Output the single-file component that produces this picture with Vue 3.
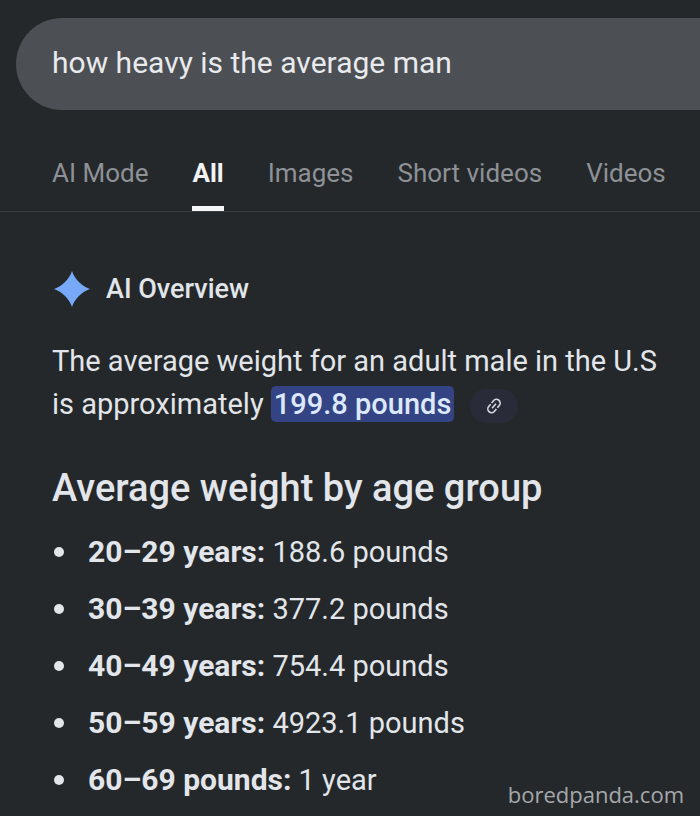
<template>
  <div class="page">
    <form class="search" role="search" @submit.prevent>
      <input v-model="query" class="search-input" type="text" aria-label="Search" />
    </form>

    <nav class="tabs">
      <a
        v-for="tab in tabs"
        :key="tab"
        href="#"
        class="tab"
        :class="{ active: tab === activeTab }"
        @click.prevent="activeTab = tab"
      >{{ tab }}</a>
    </nav>

    <main class="overview">
      <div class="overview-head">
        <svg class="spark" viewBox="0 0 36 36" aria-hidden="true">
          <path d="M18 0 C20.500 8 28 15.500 36 18 C28 20.500 20.500 28 18 36 C15.500 28 8 20.500 0 18 C8 15.500 15.500 8 18 0 Z" fill="#78a9f8" />
        </svg>
        <span>AI Overview</span>
      </div>

      <p class="summary">
        The average weight for an adult male in the U.S is approximately
        <mark>199.8 pounds</mark>
        <button class="cite" type="button" aria-label="View source">
          <svg viewBox="0 0 24 24" aria-hidden="true">
            <g transform="rotate(-50 12 12)" fill="none" stroke="#d3d6de" stroke-width="2.200">
              <path d="M11 17 H7 A5 5 0 0 1 7 7 H11" />
              <path d="M13 7 H17 A5 5 0 0 1 17 17 H13" />
              <path d="M8 12 H16" />
            </g>
          </svg>
        </button>
      </p>

      <h2>Average weight by age group</h2>
      <ul class="groups">
        <li v-for="g in groups" :key="g.label">
          <span><strong>{{ g.label }}:</strong> {{ g.value }}</span>
        </li>
      </ul>
    </main>

    <span class="watermark">boredpanda.com</span>
  </div>
</template>

<script setup>
import { ref } from 'vue'

const query = ref('how heavy is the average man')
const tabs = ['AI Mode', 'All', 'Images', 'Short videos', 'Videos']
const activeTab = ref('All')

const groups = [
  { label: '20–29 years', value: '188.6 pounds' },
  { label: '30–39 years', value: '377.2 pounds' },
  { label: '40–49 years', value: '754.4 pounds' },
  { label: '50–59 years', value: '4923.1 pounds' },
  { label: '60–69 pounds', value: '1 year' },
]
</script>

<style>
body {
  background: #24282b;
}
</style>

<style scoped>
.page {
  position: relative;
  box-sizing: border-box;
  min-height: 100vh;
  padding-top: 18px;
  overflow: hidden;
  background: #24282b;
  color: #e2e5e9;
  font-family: Roboto, "Liberation Sans", sans-serif;
}

.search {
  display: flex;
  margin-left: 16px;
  padding: 0 36px;
  border-radius: 46px 0 0 46px;
  background: #4c5054;
}

.search-input {
  flex: 1;
  box-sizing: border-box;
  min-width: 0;
  height: 92px;
  padding: 0 0 4px;
  border: 0;
  outline: 0;
  background: transparent;
  color: #e8eaed;
  font-family: inherit;
  font-size: 30px;
}

.tabs {
  display: flex;
  gap: 44px;
  margin-top: 40px;
  padding: 0 32px 0 52px;
  border-bottom: 1px solid #3a3e42;
}

.tab {
  height: 56px;
  border-bottom: 5px solid transparent;
  color: #8e9195;
  font-size: 26px;
  line-height: 46px;
  text-decoration: none;
  white-space: nowrap;
}

.tab.active {
  border-color: #f5f6f8;
  color: #f1f3f5;
  font-weight: 700;
}

.overview {
  padding: 57px 32px 16px 52px;
}

.overview-head {
  display: flex;
  align-items: center;
  gap: 16px;
  height: 40px;
  padding-left: 2px;
  font-size: 27px;
  font-weight: 500;
}

.spark {
  width: 36px;
  height: 36px;
}

.summary {
  margin: 31px 0 0;
  font-size: 29px;
  line-height: 43px;
}

mark {
  padding: 1px 3px;
  border-radius: 5px;
  background: #334383;
  color: #dce8fb;
  font-weight: 500;
}

.cite {
  display: inline-flex;
  align-items: center;
  justify-content: center;
  width: 48px;
  height: 34px;
  margin-left: 16px;
  padding: 0;
  border: 0;
  border-radius: 17px;
  background: #292c38;
  vertical-align: middle;
}

.cite svg {
  width: 18px;
  height: 18px;
}

h2 {
  margin: 40px 0 0;
  font-size: 38px;
  font-weight: 500;
  line-height: 44px;
}

.groups {
  display: flex;
  flex-direction: column;
  gap: 17px;
  margin: 22px 0 0;
  padding: 0;
  list-style: none;
  font-size: 29px;
  line-height: 40px;
}

.groups li {
  display: flex;
  align-items: center;
  gap: 24px;
  padding-left: 2px;
}

.groups li::before {
  content: "";
  width: 10px;
  height: 10px;
  border-radius: 50%;
  background: #e2e5e9;
}

.groups strong {
  font-size: 30px;
  font-weight: 700;
}

.watermark {
  position: absolute;
  right: 16px;
  bottom: 8px;
  color: #a5a8aa;
  font-family: "Open Sans", "Noto Sans", sans-serif;
  font-size: 22px;
  line-height: 28px;
}
</style>
